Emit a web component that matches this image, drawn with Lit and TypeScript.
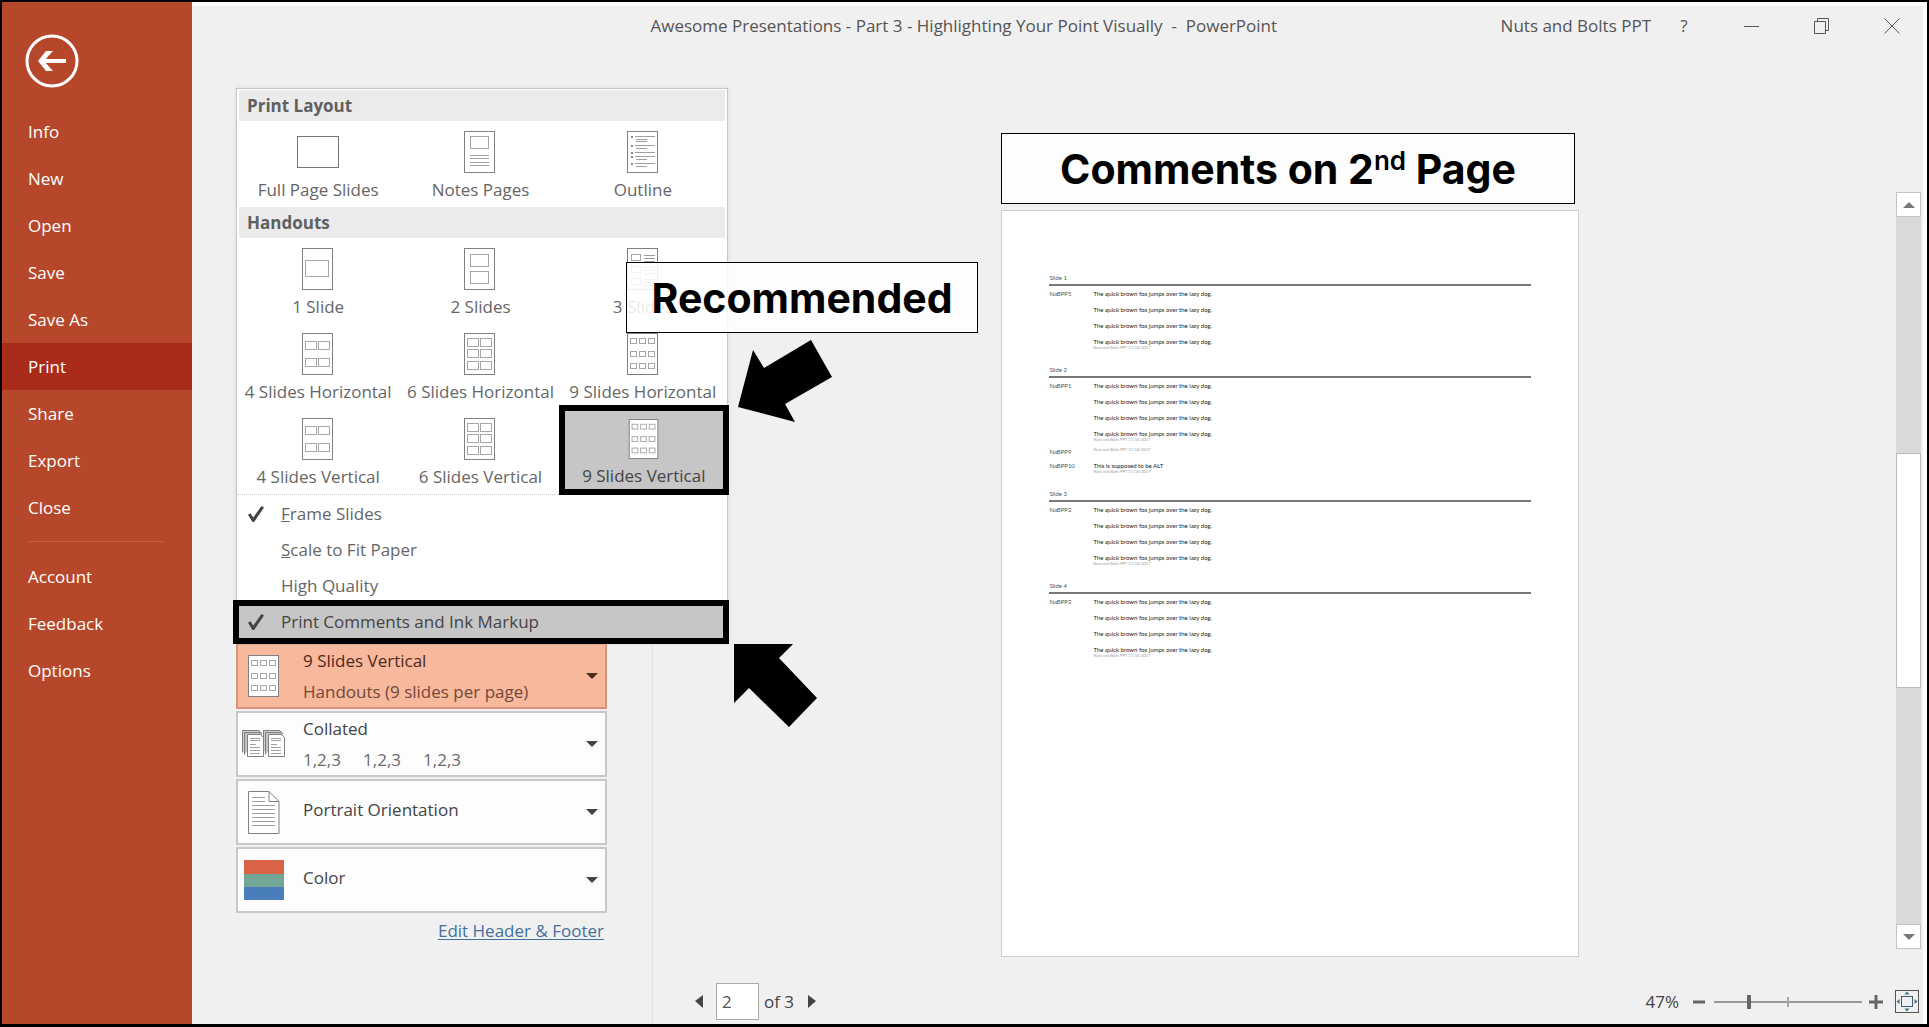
import { LitElement, html, css, svg, nothing } from "lit";
import { customElement, property, state } from "lit/decorators.js";
import { classMap } from "lit/directives/class-map.js";

type Box = [number, number, number, number];
type Line = [number, number, number];

/* Slide boxes [x, y, width, height] drawn inside each 32x43 sheet icon. */
const grid = (xs: number[], ys: number[], w: number, h: number): Box[] =>
  ys.flatMap((y) => xs.map((x): Box => [x, y, w, h]));

const BOXES: Record<string, Box[]> = {
  notes: [[6, 5, 19, 13]],
  one: [[3, 12, 24, 17]],
  two: grid([6], [6, 23], 19, 13),
  three: grid([4], [6, 18, 30], 10, 7),
  four: grid([3, 16], [8, 25], 12, 9),
  six: grid([3, 16], [5, 16, 28], 12, 9),
  nine: grid([3, 12, 21], [5, 18, 30], 7, 6),
};

/* Text rules [from x, to x, y] of the same icons. */
const LINES: Record<string, Line[]> = {
  notes: [[6, 25, 24], [6, 25, 27], [6, 25, 31], [6, 25, 34]],
  outline: [
    [8, 28, 5], [9, 20, 8], [9, 20, 10],
    [8, 28, 14], [9, 20, 17],
    [8, 28, 21], [8, 28, 25], [9, 20, 28],
    [8, 28, 32], [9, 20, 35],
  ],
  three: [
    [17, 28, 7], [17, 28, 10], [17, 28, 13],
    [17, 28, 19], [17, 28, 22], [17, 28, 25],
    [17, 28, 31], [17, 28, 34], [17, 28, 37],
  ],
};

const sheetIcon = (kind: string) => {
  if (kind === "full") {
    return html`<svg width="42" height="43" viewBox="0 0 42 43" aria-hidden="true">
      <rect x="0.5" y="5.5" width="41" height="31" fill="#fff" stroke="#777" />
    </svg>`;
  }
  return html`<svg width="32" height="43" viewBox="0 0 32 43" aria-hidden="true">
    <rect x="0.5" y="0.5" width="30" height="41" fill="#fff" stroke="#808080" />
    ${(BOXES[kind] ?? []).map(
      ([x, y, w, h]) =>
        svg`<rect x=${x + 0.5} y=${y + 0.5} width=${w - 1} height=${h - 1} fill="none" stroke="#a6a6a6" />`
    )}
    ${(LINES[kind] ?? []).map(
      ([a, b, y]) => svg`<path d="M${a} ${y + 0.5}H${b}" stroke="#a0a0a0" />`
    )}
    ${kind === "outline"
      ? [5, 14, 21, 25, 32].map((y) => svg`<rect x="4" y=${y} width="2" height="2" fill="#888" />`)
      : nothing}
  </svg>`;
};

const collatedIcon = html`<svg width="44" height="28" viewBox="0 0 44 28" aria-hidden="true">
  ${[0, 21].map(
    (x) => svg`<g transform="translate(${x} 0)" fill="#fff" stroke="#808080">
      <path d="M0.5 22.5V0.5H17L19 3" fill="#d0d0d0" />
      <path d="M2.5 24.5V2.5H18L20 4" fill="#c4c4c4" />
      <path d="M5.5 26.5V4.5H18.5L21.5 7.5V26.5Z" />
      <path d="M8 8.5H18M8 10.5H18M8 14.5H14M8 17.5H18M8 20.5H18M8 23.5H18" stroke="#a0a0a0" />
    </g>`
  )}
</svg>`;

const portraitIcon = html`<svg width="32" height="43" viewBox="0 0 32 43" aria-hidden="true">
  <path d="M0.5 0.5H21L31 10.5V42.5H0.5Z" fill="#fff" stroke="#808080" />
  <path d="M21 0.5V10.5H31" fill="none" stroke="#808080" />
  <path d="M4 6.5H17M4 10.5H17M4 14.5H27M4 18.5H27M4 22.5H27M4 26.5H27M4 30.5H27M4 34.5H27" stroke="#a0a0a0" />
</svg>`;

const colorIcon = html`<svg width="40" height="40" viewBox="0 0 40 40" aria-hidden="true">
  <rect width="40" height="14" fill="#da6245" />
  <rect y="14" width="40" height="13" fill="#71a794" />
  <rect y="27" width="40" height="13" fill="#4a7ebb" />
</svg>`;

const triangle = (points: string, w: number, h: number) =>
  html`<svg width=${w} height=${h} viewBox="0 0 ${w} ${h}" aria-hidden="true">
    <polygon points=${points} fill="currentColor" />
  </svg>`;

const caret = triangle("0,0 12,0 6,6", 12, 6);

interface Note {
  author: string;
  lines: string[];
}

const FOX = "The quick brown fox jumps over the lazy dog.";
const EDITED = "Nuts and Bolts PPT 11/14/2017";
const fox = (author: string): Note => ({ author, lines: [FOX, FOX, FOX, FOX] });

const SLIDES: { title: string; notes: Note[] }[] = [
  { title: "Slide 1", notes: [fox("NaBPP5")] },
  {
    title: "Slide 2",
    notes: [
      fox("NaBPP1"),
      { author: "NaBPP9", lines: [] },
      { author: "NaBPP10", lines: ["This is supposed to be ALT"] },
    ],
  },
  { title: "Slide 3", notes: [fox("NaBPP2")] },
  { title: "Slide 4", notes: [fox("NaBPP2")] },
];

@customElement("comments-page")
export class CommentsPage extends LitElement {
  static styles = css`
    :host {
      display: block;
      box-sizing: border-box;
      padding: 63px 47px;
      background: #fff;
      border: 1px solid #cfcfcf;
      font: 6px/8px Lato, sans-serif;
      color: #333;
    }
    .slide {
      margin-bottom: 16px;
    }
    .title {
      margin: 0;
      padding-bottom: 2px;
      border-bottom: 2px solid #777;
      font: inherit;
      color: #555;
    }
    .note {
      display: grid;
      grid-template-columns: 44px 1fr;
      padding-top: 4px;
      color: #222;
    }
    .note + .note {
      padding-top: 6px;
    }
    .author {
      color: #555;
    }
    .line {
      margin: 0 0 8px;
    }
    .line:last-of-type {
      margin: 0;
    }
    .edited {
      display: block;
      font-size: 4px;
      line-height: 4px;
      color: #999;
    }
  `;

  render() {
    return SLIDES.map(
      (s) => html`<section class="slide">
        <h2 class="title">${s.title}</h2>
        ${s.notes.map(
          (n) => html`<div class="note">
            <span class="author">${n.author}</span>
            <div>
              ${n.lines.map((l) => html`<p class="line">${l}</p>`)}
              <small class="edited">${EDITED}</small>
            </div>
          </div>`
        )}
      </section>`
    );
  }
}

@customElement("layout-menu")
export class LayoutMenu extends LitElement {
  static styles = css`
    :host {
      display: block;
      box-sizing: border-box;
      background: #fff;
      border: 1px solid #c6c6c6;
      box-shadow: 0 0 4px #d8d8d8;
      color: #666;
    }
    .head {
      margin: 1px 2px 0;
      padding: 0 8px;
      background: #ebebeb;
      font-size: 17px;
      line-height: 31px;
      font-weight: 700;
      color: #606060;
    }
    .grid {
      display: grid;
      grid-template-columns: repeat(3, 1fr);
      padding-right: 3px;
    }
    .tile {
      display: flex;
      flex-direction: column;
      align-items: center;
      gap: 3px;
      height: 85px;
      margin: 0;
      padding: 10px 0 0;
      border: 0;
      background: none;
      font: inherit;
      line-height: 26px;
      white-space: nowrap;
      color: inherit;
    }
    .tile.selected {
      margin: -3px -5px -2px -3px;
      height: 90px;
      padding-top: 8px;
      border: 6px solid #000;
      background: #c6c6c6;
      color: #444;
    }
    .options {
      display: flex;
      flex-direction: column;
      border-top: 1px dotted #ccc;
      margin-top: 1px;
      padding-top: 1px;
    }
    .option {
      display: flex;
      align-items: center;
      gap: 17px;
      height: 36px;
      padding-left: 11px;
    }
    .option.marked {
      height: 32px;
      margin: -4px -2px -2px -4px;
      padding-left: 9px;
      border: 6px solid #000;
      background: #c6c6c6;
      color: #444;
    }
    .tick {
      appearance: none;
      width: 16px;
      height: 16px;
      margin: 0;
    }
    .tick:checked {
      background: #444;
      clip-path: polygon(0 55%, 15% 45%, 33% 72%, 84% 0, 100% 10%, 38% 100%, 28% 100%);
    }
  `;

  @state() private layout = "9 Slides Vertical";

  private tile(kind: string, name: string) {
    return html`<button
      class=${classMap({ tile: true, selected: this.layout === name })}
      @click=${() => (this.layout = name)}
    >
      ${sheetIcon(kind)}<span>${name}</span>
    </button>`;
  }

  render() {
    return html`
      <h2 class="head">Print Layout</h2>
      <div class="grid">
        ${this.tile("full", "Full Page Slides")} ${this.tile("notes", "Notes Pages")}
        ${this.tile("outline", "Outline")}
      </div>
      <h2 class="head">Handouts</h2>
      <div class="grid">
        ${this.tile("one", "1 Slide")} ${this.tile("two", "2 Slides")} ${this.tile("three", "3 Slides")}
        ${this.tile("four", "4 Slides Horizontal")} ${this.tile("six", "6 Slides Horizontal")}
        ${this.tile("nine", "9 Slides Horizontal")} ${this.tile("four", "4 Slides Vertical")}
        ${this.tile("six", "6 Slides Vertical")} ${this.tile("nine", "9 Slides Vertical")}
      </div>
      <div class="options">
        <label class="option"><input class="tick" type="checkbox" checked /><span><u>F</u>rame Slides</span></label>
        <label class="option"><input class="tick" type="checkbox" /><span><u>S</u>cale to Fit Paper</span></label>
        <label class="option"><input class="tick" type="checkbox" /><span>High Quality</span></label>
        <label class="option marked"
          ><input class="tick" type="checkbox" checked /><span>Print Comments and Ink Markup</span></label
        >
      </div>
    `;
  }
}

@customElement("setting-button")
export class SettingButton extends LitElement {
  static styles = css`
    :host {
      display: block;
    }
    .button {
      display: grid;
      grid-template-columns: 52px 1fr auto;
      align-items: center;
      width: 100%;
      height: 66px;
      padding: 0 7px 0 0;
      border: 2px solid #c8c8c8;
      background: #fdfdfd;
      font: inherit;
      text-align: left;
      color: #444;
    }
    .button.active {
      border-color: #dc9276;
      background: #f7b89c;
      color: #4a2a20;
    }
    .icon {
      display: flex;
      justify-content: center;
    }
    .text {
      display: flex;
      flex-direction: column;
      padding: 0 0 6px 13px;
      line-height: 31px;
    }
    .text.double {
      padding-bottom: 0;
    }
    .detail {
      white-space: pre;
      color: #6b6b6b;
    }
    .active .detail {
      color: #74473a;
    }
    .caret {
      display: flex;
    }
  `;

  @property() label = "";
  @property() detail = "";
  @property({ type: Boolean }) active = false;
  @property({ attribute: false }) icon: unknown = nothing;

  render() {
    return html`<button class=${classMap({ button: true, active: this.active })} aria-haspopup="menu">
      <span class="icon">${this.icon}</span>
      <span class=${classMap({ text: true, double: this.detail !== "" })}>
        <span>${this.label}</span>
        ${this.detail ? html`<span class="detail">${this.detail}</span>` : nothing}
      </span>
      <span class="caret">${caret}</span>
    </button>`;
  }
}

@customElement("app-root")
export class AppRoot extends LitElement {
  static styles = css`
    :host {
      display: block;
      font: 17px/24px "Open Sans", "Noto Sans", sans-serif;
      color: #444;
    }
    .window {
      box-sizing: border-box;
      display: grid;
      grid-template-columns: 190px 1fr;
      min-height: 100vh;
      border: 2px solid #000;
      border-bottom-width: 3px;
      background: #f0f0f0;
    }
    .sidebar {
      background: #b7472a;
      color: #fff;
    }
    .back {
      display: block;
      margin: 32px 0 20px 23px;
      padding: 0;
      border: 0;
      background: none;
    }
    .back svg {
      display: block;
    }
    .nav {
      display: flex;
      flex-direction: column;
    }
    .link {
      padding: 0 26px;
      line-height: 47px;
      text-decoration: none;
      color: #fff;
    }
    .link.current {
      background: #a92b1a;
    }
    .rule {
      width: 136px;
      margin: 10px 26px 11px;
      border: 0;
      border-top: 1px solid #cb5c40;
    }
    .main {
      display: grid;
      grid-template-rows: 85px 1fr;
      box-shadow: inset -5px 5px 0 -1px #fcfcfc;
    }
    .titlebar {
      display: flex;
      align-items: center;
      height: 47px;
      padding-left: 235px;
      color: #555;
    }
    .title {
      flex: 1;
      margin: 0;
      font: inherit;
      text-align: center;
      white-space: pre;
    }
    .caption {
      display: flex;
      width: 70px;
      height: 46px;
      align-items: center;
      justify-content: center;
      padding: 0;
      border: 0;
      background: none;
      font: inherit;
      color: #555;
    }
    .caption.help {
      width: 66px;
    }
    .body {
      display: grid;
      grid-template-columns: 461px 1fr;
    }
    .settings {
      display: flex;
      flex-direction: column;
      justify-content: flex-end;
      gap: 2px;
      padding: 0 45px 81px 44px;
      border-right: 1px solid #e2e2e2;
    }
    .anchor {
      position: relative;
    }
    .menu {
      position: absolute;
      left: 0;
      bottom: 100%;
      width: 492px;
    }
    .edit {
      align-self: flex-end;
      margin: 4px 3px 0 0;
      color: #44709d;
      text-underline-offset: 2px;
    }
    .preview {
      display: flex;
      flex-direction: column;
    }
    .stage {
      flex: 1;
      display: grid;
      grid-template-columns: 1fr auto 1fr;
      grid-template-rows: minmax(0, 1fr);
      padding: 105px 6px 26px;
    }
    .paper {
      grid-column: 2;
      position: relative;
      display: flex;
      margin-top: 18px;
      aspect-ratio: 578 / 748;
    }
    .sheet {
      flex: 1;
    }
    .scroll {
      justify-self: end;
      display: flex;
      flex-direction: column;
      width: 25px;
      margin-bottom: 8px;
      background: #d9d9d9;
    }
    .step {
      display: flex;
      align-items: center;
      justify-content: center;
      height: 25px;
      padding: 0;
      border: 1px solid #c4c4c4;
      background: #fff;
      color: #777;
    }
    .track {
      flex: 1;
      display: grid;
      grid-template-rows: 1fr 1fr 1fr;
    }
    .thumb {
      grid-row: 2;
      border: 1px solid #bbb;
      background: #fff;
    }
    .footer {
      box-sizing: border-box;
      display: flex;
      align-items: center;
      height: 41px;
      padding: 0 8px 4px 42px;
    }
    .plain {
      display: flex;
      align-items: center;
      padding: 0;
      border: 0;
      background: none;
      color: #444;
    }
    .number {
      box-sizing: border-box;
      width: 43px;
      height: 37px;
      margin: 0 5px 0 13px;
      padding: 0 5px;
      border: 1px solid #ababab;
      background: #fff;
      font: inherit;
      color: #555;
    }
    .count {
      margin-right: 14px;
    }
    .percent {
      margin: 0 14px 0 auto;
    }
    .zoom {
      appearance: none;
      width: 148px;
      height: 16px;
      margin: 0 7px 0 9px;
      background: linear-gradient(#a9a3b5, #a9a3b5) 50% 50% / 2px 10px no-repeat,
        linear-gradient(#999, #999) 50% 50% / 100% 2px no-repeat;
    }
    .zoom::-webkit-slider-thumb {
      appearance: none;
      width: 4px;
      height: 14px;
      background: #666;
    }
    .fit {
      margin-left: 12px;
    }
    .callout {
      position: absolute;
      box-sizing: border-box;
      display: flex;
      align-items: center;
      justify-content: center;
      height: 71px;
      border: 1px solid #000;
      background: rgba(255, 255, 255, 0.86);
      font: 700 41px/44px Inter, sans-serif;
      white-space: pre;
      color: #000;
    }
    .callout.comments {
      left: 0;
      right: 4px;
      bottom: calc(100% + 6px);
    }
    .callout.recommended {
      left: 390px;
      top: 174px;
      width: 352px;
    }
    .raised {
      align-self: flex-start;
      padding-top: 12px;
      font-size: 26px;
      line-height: 30px;
      font-weight: 600;
    }
    .arrow {
      position: absolute;
    }
    .arrow.upper {
      left: 502px;
      bottom: 220px;
    }
    .arrow.lower {
      left: 498px;
      top: calc(100% + 1px);
    }
  `;

  private link(name: string, current = false) {
    return html`<a
      class=${classMap({ link: true, current })}
      href="#${name.toLowerCase().replace(" ", "-")}"
      aria-current=${current ? "page" : nothing}
      >${name}</a
    >`;
  }

  render() {
    return html`
      <div class="window">
        <aside class="sidebar">
          <button class="back" aria-label="Back">
            <svg width="54" height="54" viewBox="0 0 54 54" fill="none" stroke="#fff">
              <circle cx="27" cy="27" r="25" stroke-width="3" />
              <path d="M41 27H16" stroke-width="4" />
              <path d="M28 17L21 17L13 27L21 37L28 37L19 27Z" fill="#fff" stroke="none" />
            </svg>
          </button>
          <nav class="nav">
            ${["Info", "New", "Open", "Save", "Save As", "Print", "Share", "Export", "Close"].map((n) =>
              this.link(n, n === "Print")
            )}
            <hr class="rule" />
            ${["Account", "Feedback", "Options"].map((n) => this.link(n))}
          </nav>
        </aside>
        <main class="main">
          <header class="titlebar">
            <h1 class="title">Awesome Presentations - Part 3 - Highlighting Your Point Visually  -  PowerPoint</h1>
            <span>Nuts and Bolts PPT</span>
            <button class="caption help" aria-label="Help">?</button>
            <button class="caption" aria-label="Minimize">
              <svg width="16" height="16" stroke="#555"><path d="M0 8.5H15" /></svg>
            </button>
            <button class="caption" aria-label="Restore">
              <svg width="16" height="16" fill="none" stroke="#555">
                <path d="M0.5 3.5H11.5V15.5H0.5ZM3.5 3.5V0.5H14.5V12.5H11.5" />
              </svg>
            </button>
            <button class="caption" aria-label="Close">
              <svg width="16" height="16" stroke="#555"><path d="M0.5 0.5L15.5 15.5M15.5 0.5L0.5 15.5" /></svg>
            </button>
          </header>
          <div class="body">
            <section class="settings">
              <div class="anchor">
                <setting-button
                  active
                  label="9 Slides Vertical"
                  detail="Handouts (9 slides per page)"
                  .icon=${sheetIcon("nine")}
                ></setting-button>
                <div class="menu">
                  <layout-menu></layout-menu>
                  <div class="callout recommended">Recommended</div>
                  <svg class="arrow upper" width="95" height="83" viewBox="0 0 95 83" aria-hidden="true">
                    <polygon points="0,67 15,10 26,28 73,0 94,37 47,64 57,82" />
                  </svg>
                  <svg class="arrow lower" width="84" height="84" viewBox="0 0 84 84" aria-hidden="true">
                    <polygon points="0,0 59,0 45,14 83,54 55,83 15,44 0,59" />
                  </svg>
                </div>
              </div>
              <setting-button
                label="Collated"
                detail="1,2,3     1,2,3     1,2,3"
                .icon=${collatedIcon}
              ></setting-button>
              <setting-button label="Portrait Orientation" .icon=${portraitIcon}></setting-button>
              <setting-button label="Color" .icon=${colorIcon}></setting-button>
              <a class="edit" href="#header-footer">Edit Header &amp; Footer</a>
            </section>
            <section class="preview">
              <div class="stage">
                <div class="paper">
                  <comments-page class="sheet"></comments-page>
                  <div class="callout comments">Comments on 2<span class="raised">nd</span> Page</div>
                </div>
                <div class="scroll">
                  <button class="step" aria-label="Scroll up">${triangle("0,6 6,0 12,6", 12, 6)}</button>
                  <div class="track"><div class="thumb"></div></div>
                  <button class="step" aria-label="Scroll down">${triangle("0,0 12,0 6,6", 12, 6)}</button>
                </div>
              </div>
              <footer class="footer">
                <button class="plain" aria-label="Previous page">${triangle("8,0 8,13 0,6", 8, 13)}</button>
                <input class="number" aria-label="Page" value="2" />
                <span class="count">of 3</span>
                <button class="plain" aria-label="Next page">${triangle("0,0 8,6 0,13", 8, 13)}</button>
                <span class="percent">47%</span>
                <button class="plain" aria-label="Zoom out">
                  <svg width="12" height="14"><path d="M0 7H12" stroke="#666" stroke-width="3" /></svg>
                </button>
                <input class="zoom" type="range" aria-label="Zoom" min="0" max="100" value="23" />
                <button class="plain" aria-label="Zoom in">
                  <svg width="14" height="14"><path d="M0 7H14M7 0V14" stroke="#666" stroke-width="3" /></svg>
                </button>
                <button class="plain fit" aria-label="Zoom to page">
                  <svg width="24" height="23" viewBox="0 0 24 23" fill="none" stroke="#555">
                    <rect x="0.5" y="0.5" width="23" height="22" />
                    <rect x="6.5" y="6.5" width="11" height="10" stroke="#3f5f6f" />
                    <path
                      d="M12 1.5L14.5 4.5H9.5ZM12 21.5L14.5 18.5H9.5ZM1.5 11.5L4.5 9V14ZM22.5 11.5L19.5 9V14Z"
                      fill="#3f6f80"
                      stroke="none"
                    />
                  </svg>
                </button>
              </footer>
            </section>
          </div>
        </main>
      </div>
    `;
  }
}
